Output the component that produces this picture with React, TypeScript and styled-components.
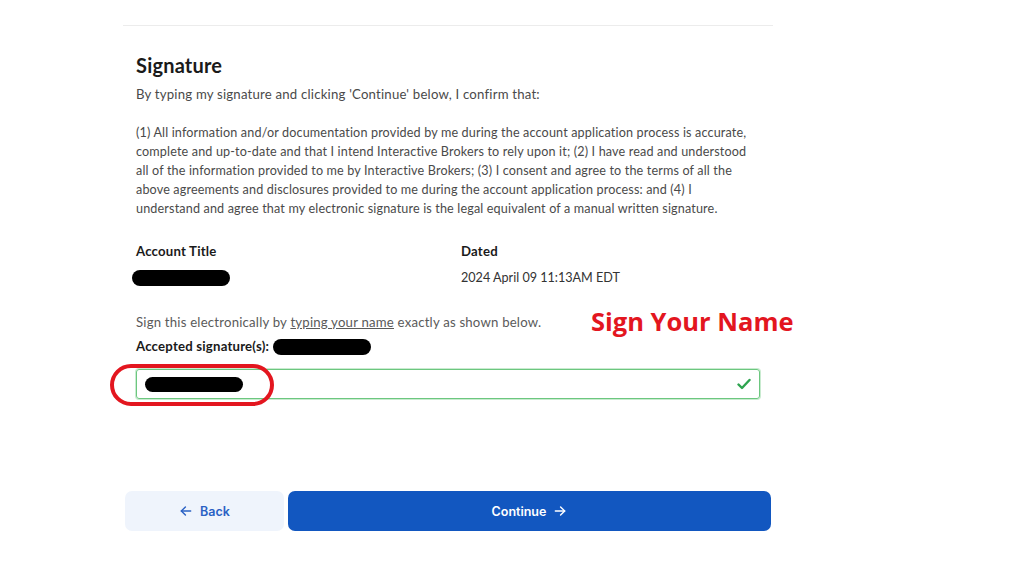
import React from "react";
import styled, { createGlobalStyle } from "styled-components";

const Global = createGlobalStyle`
  html, body { margin: 0; padding: 0; background: #ffffff; }
  body { font-family: "Lato", "Liberation Sans", sans-serif; color: #222; }
`;

const Page = styled.div`
  width: 1024px;
  height: 576px;
  overflow: hidden;
  padding-top: 25px;
  box-sizing: border-box;
`;

const Column = styled.main`
  width: 650px;
  margin-left: 123px;
  border-top: 1px solid #ececec;
  display: flex;
  flex-direction: column;
`;

const Section = styled.section`
  padding: 0 13px;
  position: relative;
  display: flex;
  flex-direction: column;
`;

const Title = styled.h1`
  margin: 27px 0 0;
  font-size: 20px;
  line-height: 24px;
  font-weight: 700;
  color: #1a1a1a;
  letter-spacing: 0.2px;
`;

const Text = styled.p<{ $top?: number; $wide?: boolean }>`
  margin: ${(p) => p.$top ?? 0}px 0 0;
  font-size: ${(p) => (p.$wide ? "13.2px" : "12.6px")};
  letter-spacing: ${(p) => (p.$wide ? "0.2px" : "0.15px")};
  line-height: 19px;
  color: #4a4a4a;
  max-width: 614px;
`;

const InfoGrid = styled.div`
  margin-top: 24px;
  display: grid;
  grid-template-columns: 325px 1fr;
  row-gap: 7px;
`;

const Label = styled.div`
  font-size: 13.2px;
  letter-spacing: 0.2px;
  line-height: 19px;
  font-weight: 700;
  color: #1a1a1a;
`;

const Value = styled.div<{ $shift?: number }>`
  font-size: 12.6px;
  line-height: 20px;
  color: #333;
  display: flex;
  align-items: center;
  margin-left: ${(p) => p.$shift ?? 0}px;
`;

const Redacted = styled.span<{ $w: number; $h?: number }>`
  display: inline-block;
  width: ${(p) => p.$w}px;
  height: ${(p) => p.$h ?? 16}px;
  background: #000;
  border-radius: 9px;
`;

const Hint = styled.p`
  margin: 25px 0 0;
  font-size: 13.2px;
  letter-spacing: 0.2px;
  line-height: 19px;
  color: #5a5a5a;
  span { text-decoration: underline; }
`;

const AcceptedRow = styled.div`
  margin-top: 5px;
  display: flex;
  align-items: center;
  gap: 4px;
  font-size: 13.2px;
  letter-spacing: 0.2px;
  line-height: 19px;
  font-weight: 700;
  color: #1a1a1a;
`;

const InputBox = styled.div`
  margin-top: 13px;
  width: 624px;
  height: 30px;
  box-sizing: border-box;
  border: 1px solid #6cc77f;
  box-shadow: 0 0 0 1px #c9ebd0;
  border-radius: 3px;
  display: flex;
  align-items: center;
  justify-content: space-between;
  padding: 0 8px 0 8px;
  position: relative;
`;

const Annotation = styled.div`
  position: absolute;
  left: 591px;
  top: 305px;
  font-family: "Open Sans", "Liberation Sans", sans-serif;
  font-weight: 700;
  font-size: 25.5px;
  line-height: 32px;
  color: #e3161f;
  white-space: nowrap;
`;

const Ring = styled.div`
  position: absolute;
  left: -27px;
  top: -6px;
  width: 164px;
  height: 42px;
  box-sizing: border-box;
  border: 4.5px solid #e3161f;
  border-radius: 21px;
  pointer-events: none;
`;

const Actions = styled.div`
  margin-top: 92px;
  padding-left: 2px;
  display: flex;
  gap: 4px;
`;

const Button = styled.button<{ $primary?: boolean }>`
  height: 40px;
  border: none;
  border-radius: 7px;
  font-family: "Inter", "Liberation Sans", sans-serif;
  font-size: 12.5px;
  font-weight: 600;
  display: flex;
  align-items: center;
  justify-content: center;
  gap: 7px;
  cursor: pointer;
  background: ${(p) => (p.$primary ? "#1257c0" : "#eff4fc")};
  color: ${(p) => (p.$primary ? "#ffffff" : "#2a61c4")};
  width: ${(p) => (p.$primary ? "483px" : "159px")};
`;

const Arrow = ({ dir }: { dir: "left" | "right" }) => (
  <svg width="14" height="14" viewBox="0 0 24 24" fill="none" stroke="currentColor" strokeWidth="2.4" strokeLinecap="round" strokeLinejoin="round">
    {dir === "left" ? (
      <>
        <path d="M20 12H4" />
        <path d="M11 5l-7 7 7 7" />
      </>
    ) : (
      <>
        <path d="M4 12h16" />
        <path d="M13 5l7 7-7 7" />
      </>
    )}
  </svg>
);

const Check = () => (
  <svg width="14" height="12" viewBox="0 0 14 12" fill="none">
    <path d="M1.5 6.5l3.5 3.5 7.5-8" stroke="#2ea44f" strokeWidth="2.4" strokeLinecap="round" strokeLinejoin="round" />
  </svg>
);

export default function App() {
  return (
    <>
      <Global />
      <Page>
        <Column>
          <Section>
            <Title>Signature</Title>
            <Text $top={8} $wide>By typing my signature and clicking 'Continue' below, I confirm that:</Text>
            <Text $top={19}>
              (1) All information and/or documentation provided by me during the account application process is accurate,
              complete and up-to-date and that I intend Interactive Brokers to rely upon it; (2) I have read and understood
              all of the information provided to me by Interactive Brokers; (3) I consent and agree to the terms of all the
              above agreements and disclosures provided to me during the account application process: and (4) I
              understand and agree that my electronic signature is the legal equivalent of a manual written signature.
            </Text>
            <InfoGrid>
              <Label>Account Title</Label>
              <Label>Dated</Label>
              <Value $shift={-4}>
                <Redacted $w={98} />
              </Value>
              <Value>2024 April 09 11:13AM EDT</Value>
            </InfoGrid>
            <Hint>
              Sign this electronically by <span>typing your name</span> exactly as shown below.
            </Hint>
            <AcceptedRow>
              Accepted signature(s): <Redacted $w={98} />
            </AcceptedRow>
            <InputBox>
              <Redacted $w={98} $h={15} />
              <Check />
              <Ring />
            </InputBox>
          </Section>
          <Annotation>Sign Your Name</Annotation>
          <Actions>
            <Button>
              <Arrow dir="left" />
              Back
            </Button>
            <Button $primary>
              Continue
              <Arrow dir="right" />
            </Button>
          </Actions>
        </Column>
      </Page>
    </>
  );
}
